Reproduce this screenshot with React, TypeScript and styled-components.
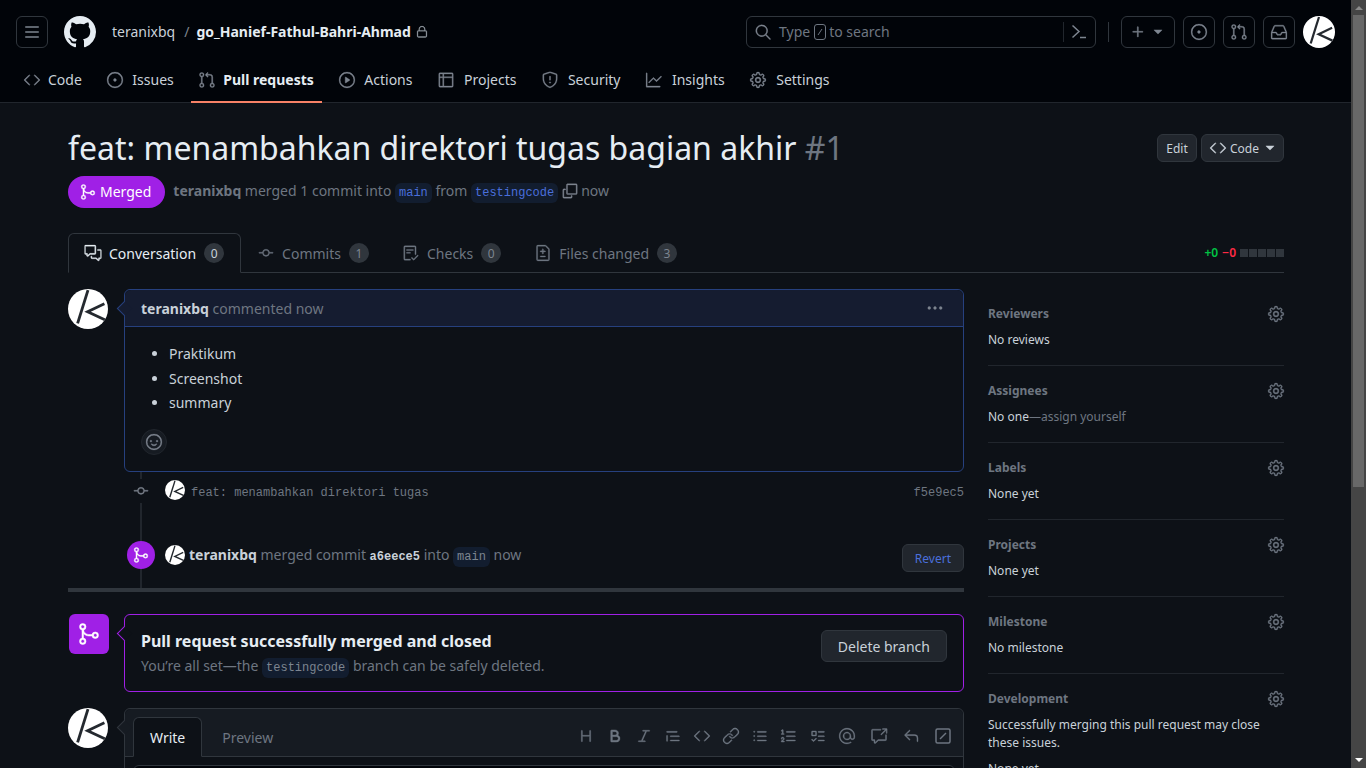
import React from 'react';
import styled, { createGlobalStyle } from 'styled-components';
import { BsGithub } from 'react-icons/bs';
import {
  GoBold,
  GoChecklist,
  GoCode,
  GoCommentDiscussion,
  GoCopy,
  GoCrossReference,
  GoFileDiff,
  GoGear,
  GoGitCommit,
  GoGitMerge,
  GoGitPullRequest,
  GoGraph,
  GoHeading,
  GoInbox,
  GoIssueOpened,
  GoItalic,
  GoKebabHorizontal,
  GoLink,
  GoListOrdered,
  GoListUnordered,
  GoLock,
  GoMention,
  GoPlay,
  GoPlus,
  GoQuote,
  GoReply,
  GoSearch,
  GoShield,
  GoSmiley,
  GoTable,
  GoTasklist,
  GoTriangleDown,
} from 'react-icons/go';

const colors = {
  page: '#0d1117',
  header: '#010409',
  border: '#30363d',
  softBorder: '#21262d',
  text: '#e6edf3',
  body: '#c9d1d9',
  muted: '#7d8590',
  dim: '#6e7681',
  accent: '#4a6fdc',
  accentBg: '#121d2f',
  accentBorder: '#26407e',
  commentHead: '#151c30',
  merged: '#a020e6',
  button: '#21262d',
  panel: '#161b22',
};

const GlobalStyle = createGlobalStyle`
  html, body {
    margin: 0;
    height: 100%;
    overflow: hidden;
    background: ${colors.page};
  }

  body {
    font-family: 'Noto Sans', sans-serif;
    font-size: 14px;
    line-height: 21px;
    color: ${colors.text};
  }

  * {
    box-sizing: border-box;
  }

  /* the go set ships the 24 grid, blown up a little to read like the 16 grid */
  svg[viewBox='0 0 24 24'] {
    transform: scale(1.08);
    stroke: currentColor;
    stroke-width: 0.5px;
  }
`;

const Avatar: React.FC<{ size: number }> = ({ size }) => (
  <AvatarSvg width={size} height={size} viewBox="0 0 100 100">
    <circle cx="50" cy="50" r="50" fill="#fff" />
    <path d="M50 3 24 86" stroke="#24292f" strokeWidth="7" fill="none" />
    <path d="M91 37 49 57l43 20" stroke="#24292f" strokeWidth="7" fill="none" />
  </AvatarSvg>
);

const SlashBox: React.FC<{ size: number }> = ({ size }) => (
  <svg width={size} height={size} viewBox="0 0 16 16" fill="none" stroke="currentColor">
    <rect x="1" y="1" width="14" height="14" rx="1.5" strokeWidth="1.5" />
    <path d="M5 11l6-6" strokeWidth="1.5" />
  </svg>
);

const SearchSlash: React.FC = () => (
  <svg width="12" height="16" viewBox="0 0 12 16" fill="none" stroke="currentColor">
    <rect x="0.5" y="0.5" width="11" height="15" rx="2.5" />
    <path d="M4 11l4-6" />
  </svg>
);

const ThreeBars: React.FC = () => (
  <svg width="16" height="16" viewBox="0 0 16 16" fill="none" stroke="currentColor" strokeWidth="1.5" strokeLinecap="round">
    <path d="M1.75 3h12.5M1.75 8h12.5M1.75 13h12.5" />
  </svg>
);

const Prompt: React.FC = () => (
  <svg width="16" height="16" viewBox="0 0 16 16" fill="none" stroke="currentColor" strokeWidth="1.5">
    <path d="M1.5 1.5 8 7.5l-6.5 6M9 13.5h6" />
  </svg>
);

const navItems = [
  { label: 'Code', icon: GoCode, gap: 8 },
  { label: 'Issues', icon: GoIssueOpened, gap: 9 },
  { label: 'Pull requests', icon: GoGitPullRequest, gap: 8, active: true },
  { label: 'Actions', icon: GoPlay, gap: 9 },
  { label: 'Projects', icon: GoTable, gap: 10 },
  { label: 'Security', icon: GoShield, gap: 10 },
  { label: 'Insights', icon: GoGraph, gap: 10 },
  { label: 'Settings', icon: GoGear, gap: 10 },
];

const prTabs = [
  { label: 'Conversation', count: 0, icon: GoCommentDiscussion, active: true },
  { label: 'Commits', count: 1, icon: GoGitCommit },
  { label: 'Checks', count: 0, icon: GoChecklist },
  { label: 'Files changed', count: 3, icon: GoFileDiff },
];

const toolbarIcons = [
  GoHeading,
  GoBold,
  GoItalic,
  GoQuote,
  GoCode,
  GoLink,
  GoListUnordered,
  GoListOrdered,
  GoTasklist,
  GoMention,
  GoCrossReference,
  GoReply,
];

const sidebarSections = [
  { title: 'Reviewers', body: 'No reviews' },
  { title: 'Assignees', body: 'No one', hint: 'assign yourself' },
  { title: 'Labels', body: 'None yet' },
  { title: 'Projects', body: 'None yet' },
  { title: 'Milestone', body: 'No milestone' },
  {
    title: 'Development',
    body: 'Successfully merging this pull request may close these issues.',
    last: true,
  },
];

export default function App() {
  return (
    <>
      <GlobalStyle />
      <Screen>
        <Page>
          <Header>
            <TopRow>
              <IconButton>
                <ThreeBars />
              </IconButton>
              <GithubLogo>
                <BsGithub size={32} />
              </GithubLogo>
              <Owner>teranixbq</Owner>
              <Slash>/</Slash>
              <RepoName>go_Hanief-Fathul-Bahri-Ahmad</RepoName>
              <RepoLock>
                <GoLock size={12} />
              </RepoLock>
              <SearchBox>
                <GoSearch size={16} />
                <SearchHint>
                  Type
                  <SearchKey>
                    <SearchSlash />
                  </SearchKey>
                  to search
                </SearchHint>
                <SearchDivider />
                <Prompt />
              </SearchBox>
              <HeaderDivider />
              <PlusButton>
                <GoPlus size={16} />
                <Caret size={16} />
              </PlusButton>
              <IconButton>
                <GoIssueOpened size={16} />
              </IconButton>
              <IconButton>
                <GoGitPullRequest size={16} />
              </IconButton>
              <IconButton>
                <GoInbox size={16} />
              </IconButton>
              <Avatar size={32} />
            </TopRow>
            <Nav>
              {navItems.map(({ label, icon: Icon, active, gap }) => (
                <NavTab key={label} $active={active} $gap={gap}>
                  <Icon size={16} />
                  <span>{label}</span>
                </NavTab>
              ))}
            </Nav>
          </Header>

          <Content>
            <TitleRow>
              <Title>
                feat: menambahkan direktori tugas bagian akhir <TitleNumber>#1</TitleNumber>
              </Title>
              <TitleActions>
                <SmallButton>Edit</SmallButton>
                <SmallButton>
                  <GoCode size={16} />
                  Code
                  <CodeCaret>
                    <Caret size={16} />
                  </CodeCaret>
                </SmallButton>
              </TitleActions>
            </TitleRow>

            <StateRow>
              <MergedPill>
                <GoGitMerge size={16} />
                <PillLabel>Merged</PillLabel>
              </MergedPill>
              <StateText>
                <strong>teranixbq</strong> merged 1 commit into <BranchRef>main</BranchRef> from{' '}
                <BranchRef>testingcode</BranchRef>
                <CopyIcon>
                  <GoCopy size={16} />
                </CopyIcon>
                now
              </StateText>
            </StateRow>

            <TabBar>
              {prTabs.map(({ label, count, icon: Icon, active }) => (
                <PrTab key={label} $active={active}>
                  <Icon size={16} />
                  {label}
                  <Counter $active={active}>{count}</Counter>
                </PrTab>
              ))}
              <DiffStat>
                <Added>+0</Added>
                <Removed>−0</Removed>
                <DiffBlocks>
                  {[0, 1, 2, 3, 4].map((n) => (
                    <DiffBlock key={n} />
                  ))}
                </DiffBlocks>
              </DiffStat>
            </TabBar>

            <Columns>
              <Discussion>
                <EntryRow>
                  <Avatar size={40} />
                  <CommentBox>
                    <CommentHead>
                      <span>
                        <strong>teranixbq</strong> commented now
                      </span>
                      <GoKebabHorizontal size={16} />
                    </CommentHead>
                    <CommentBody>
                      <BulletList>
                        <li>Praktikum</li>
                        <li>Screenshot</li>
                        <li>summary</li>
                      </BulletList>
                      <ReactionButton>
                        <GoSmiley size={16} />
                      </ReactionButton>
                    </CommentBody>
                  </CommentBox>
                </EntryRow>

                <Timeline>
                  <CommitRow>
                    <CommitBadge>
                      <GoGitCommit size={16} />
                    </CommitBadge>
                    <Avatar size={20} />
                    <CommitMessage>feat: menambahkan direktori tugas</CommitMessage>
                    <CommitSha>f5e9ec5</CommitSha>
                  </CommitRow>
                  <MergeEvent>
                    <MergeBadge>
                      <GoGitMerge size={16} />
                    </MergeBadge>
                    <Avatar size={20} />
                    <MergeText>
                      <strong>teranixbq</strong> merged commit <ShaLink>a6eece5</ShaLink> into{' '}
                      <PlainRef>main</PlainRef> now
                    </MergeText>
                    <RevertButton>Revert</RevertButton>
                  </MergeEvent>
                </Timeline>
                <ThickRule />

                <MergedRow>
                  <MergedSquare>
                    <GoGitMerge size={24} />
                  </MergedSquare>
                  <MergedBox>
                    <div>
                      <MergedTitle>Pull request successfully merged and closed</MergedTitle>
                      <MergedSub>
                        You’re all set—the <PlainRef>testingcode</PlainRef> branch can be safely
                        deleted.
                      </MergedSub>
                    </div>
                    <DeleteButton>Delete branch</DeleteButton>
                  </MergedBox>
                </MergedRow>

                <EditorRow>
                  <Avatar size={40} />
                  <EditorBox>
                    <EditorHead>
                      <EditorTab $active>Write</EditorTab>
                      <EditorTab>Preview</EditorTab>
                      <Toolbar>
                        {toolbarIcons.map((Icon, n) => (
                          <ToolbarIcon key={n} $wide={n >= 10}>
                            <Icon size={16} />
                          </ToolbarIcon>
                        ))}
                        <ToolbarIcon $wide>
                          <SlashBox size={16} />
                        </ToolbarIcon>
                      </Toolbar>
                    </EditorHead>
                    <TextArea />
                  </EditorBox>
                </EditorRow>
              </Discussion>

              <Sidebar>
                {sidebarSections.map(({ title, body, hint, last }) => (
                  <SideSection key={title} $last={last}>
                    <SideHead>
                      {title}
                      <GoGear size={16} />
                    </SideHead>
                    <SideBody>
                      {body}
                      {hint && <SideHint>—{hint}</SideHint>}
                    </SideBody>
                  </SideSection>
                ))}
                <SideBody>None yet</SideBody>
              </Sidebar>
            </Columns>
          </Content>
        </Page>
        <ScrollBar>
          <ScrollArrow $up />
          <ScrollThumb />
          <ScrollArrow />
        </ScrollBar>
      </Screen>
    </>
  );
}

const Screen = styled.div`
  display: flex;
  height: 100vh;
  overflow: hidden;
`;

const Page = styled.div`
  flex: 1;
  min-width: 0;
`;

const Header = styled.header`
  height: 103px;
  background: ${colors.header};
  box-shadow: inset 0 -1px 0 ${colors.softBorder};
`;

const TopRow = styled.div`
  display: flex;
  align-items: center;
  padding: 16px 16px 0;
  color: ${colors.muted};
`;

const IconButton = styled.div`
  display: flex;
  align-items: center;
  justify-content: center;
  flex: none;
  width: 32px;
  height: 32px;
  margin-right: 8px;
  border: 1px solid ${colors.border};
  border-radius: 6px;
  color: ${colors.muted};
`;

const GithubLogo = styled.div`
  display: flex;
  margin: 0 16px 0 8px;
  color: ${colors.text};
`;

const Owner = styled.span`
  padding-bottom: 2px;
  color: ${colors.body};
`;

const Slash = styled.span`
  margin: 0 7px 0 9px;
  padding-bottom: 2px;
  color: ${colors.muted};
`;

const RepoName = styled.span`
  padding-bottom: 2px;
  font-weight: 700;
  color: ${colors.text};
`;

const RepoLock = styled.span`
  display: flex;
  margin-left: 5px;
  color: #9da5ae;
`;

const SearchBox = styled.div`
  display: flex;
  align-items: center;
  flex: none;
  width: 350px;
  height: 32px;
  margin-left: auto;
  padding: 0 8px;
  border: 1px solid ${colors.border};
  border-radius: 6px;
  color: ${colors.muted};
`;

const SearchHint = styled.span`
  display: flex;
  align-items: center;
  flex: 1;
  margin-left: 8px;
  padding-bottom: 2px;
  color: ${colors.dim};
`;

const SearchKey = styled.span`
  display: flex;
  margin: 2px 3px 0 4px;
`;

const SearchDivider = styled.span`
  width: 1px;
  height: 20px;
  margin-right: 7px;
  background: ${colors.softBorder};
`;

const HeaderDivider = styled.span`
  flex: none;
  width: 1px;
  height: 20px;
  margin: 0 12px;
  background: ${colors.border};
`;

const PlusButton = styled(IconButton)`
  gap: 4px;
  width: 54px;
`;

const Caret = styled(GoTriangleDown)`
  && {
    transform: none;
    stroke: none;
  }
`;

const Nav = styled.nav`
  display: flex;
  gap: 9.5px;
  height: 47px;
  margin-top: 8px;
  padding: 0 16px;
`;

const NavTab = styled.div<{ $active?: boolean; $gap: number }>`
  position: relative;
  display: flex;
  align-items: center;
  gap: ${({ $gap }) => $gap}px;
  padding: 0 8px;
  color: ${({ $active }) => ($active ? colors.text : colors.body)};
  font-weight: ${({ $active }) => ($active ? 700 : 400)};

  svg {
    color: ${colors.muted};
  }

  &::after {
    content: '';
    display: ${({ $active }) => ($active ? 'block' : 'none')};
    position: absolute;
    left: 0;
    right: 0;
    bottom: 0;
    height: 2px;
    background: #f78166;
  }
`;

const Content = styled.main`
  padding: 25px 67px 0 68px;
`;

const TitleRow = styled.div`
  display: flex;
  align-items: flex-start;
  justify-content: space-between;
`;

const Title = styled.h1`
  margin: 0;
  font-size: 32px;
  font-weight: 400;
  line-height: 40px;
  color: ${colors.text};
`;

const TitleNumber = styled.span`
  color: ${colors.dim};
`;

const TitleActions = styled.div`
  display: flex;
  gap: 4px;
  margin-top: 6px;
`;

const SmallButton = styled.div`
  display: flex;
  align-items: center;
  justify-content: center;
  gap: 4px;
  min-width: 40px;
  height: 28px;
  padding: 0 8px;
  border: 1px solid ${colors.border};
  border-radius: 6px;
  background: ${colors.button};
  color: ${colors.body};
  font-size: 12px;
`;

const CodeCaret = styled.span`
  display: flex;
  margin: 0 -3px 0 -1px;
`;

const StateRow = styled.div`
  display: flex;
  align-items: center;
  gap: 8px;
  margin-top: 8px;
`;

const MergedPill = styled.div`
  display: flex;
  align-items: center;
  gap: 4px;
  height: 32px;
  padding: 0 14px 0 12px;
  border-radius: 16px;
  background: ${colors.merged};
  color: #fff;
`;

const PillLabel = styled.span`
  padding-bottom: 2px;
`;

const StateText = styled.div`
  margin-top: -1px;
  color: ${colors.dim};

  strong {
    font-weight: 700;
  }
`;

const BranchRef = styled.code`
  display: inline-block;
  padding: 0 4px;
  border-radius: 6px;
  background: ${colors.accentBg};
  color: ${colors.accent};
  font-family: 'Liberation Mono', monospace;
  font-size: 12px;
  line-height: 20px;
`;

const CopyIcon = styled.span`
  display: inline-flex;
  margin: 0 3px 0 4px;
  vertical-align: -3px;
  color: ${colors.muted};
`;

const TabBar = styled.div`
  display: flex;
  align-items: flex-end;
  height: 40px;
  margin-top: 25px;
  border-bottom: 1px solid ${colors.border};
`;

const PrTab = styled.div<{ $active?: boolean }>`
  display: flex;
  align-items: center;
  gap: 8px;
  height: 40px;
  margin-bottom: -1px;
  padding: 0 16px;
  border: 1px solid ${({ $active }) => ($active ? colors.border : 'transparent')};
  border-bottom-color: ${({ $active }) => ($active ? colors.page : 'transparent')};
  border-radius: 6px 6px 0 0;
  color: ${({ $active }) => ($active ? colors.text : colors.dim)};

  svg {
    color: ${({ $active }) => ($active ? colors.text : colors.dim)};
  }
`;

const Counter = styled.span<{ $active?: boolean }>`
  display: flex;
  align-items: center;
  justify-content: center;
  width: 20px;
  height: 20px;
  border-radius: 10px;
  background: #30363d;
  color: ${({ $active }) => ($active ? colors.body : colors.muted)};
  font-size: 12px;
`;

const DiffStat = styled.div`
  display: flex;
  align-items: center;
  align-self: center;
  margin-left: auto;
  font-size: 12px;
  font-weight: 600;
`;

const Added = styled.span`
  margin-right: 4px;
  color: #00c244;
`;

const Removed = styled.span`
  margin-right: 4px;
  color: #ff2a44;
`;

const DiffBlocks = styled.span`
  display: flex;
  gap: 1px;
`;

const DiffBlock = styled.span`
  width: 8px;
  height: 8px;
  background: #30363d;
`;

const Columns = styled.div`
  display: flex;
  gap: 24px;
  margin-top: 16px;
`;

const Discussion = styled.div`
  flex: none;
  width: 896px;
`;

const EntryRow = styled.div`
  display: flex;
  align-items: flex-start;
  gap: 16px;
`;

const CommentBox = styled.div`
  position: relative;
  flex: 1;
  height: 183px;
  border: 1px solid ${colors.accentBorder};
  border-radius: 6px;

  &::before {
    content: '';
    position: absolute;
    left: -6px;
    top: 13px;
    width: 10px;
    height: 10px;
    border-left: 1px solid ${colors.accentBorder};
    border-bottom: 1px solid ${colors.accentBorder};
    background: ${colors.commentHead};
    transform: rotate(45deg);
  }
`;

const CommentHead = styled.div`
  display: flex;
  align-items: center;
  justify-content: space-between;
  height: 37px;
  padding: 0 20px 0 16px;
  border-bottom: 1px solid ${colors.accentBorder};
  border-radius: 6px 6px 0 0;
  background: ${colors.commentHead};
  color: ${colors.dim};

  strong {
    font-weight: 700;
    color: ${colors.body};
  }

  svg {
    color: ${colors.muted};
  }
`;

const CommentBody = styled.div`
  padding: 16px;
`;

const BulletList = styled.ul`
  margin: 0;
  padding-left: 28px;
  color: ${colors.body};

  li + li {
    margin-top: 3.5px;
  }
`;

const ReactionButton = styled.div`
  display: flex;
  align-items: center;
  justify-content: center;
  width: 26px;
  height: 26px;
  margin-top: 16px;
  border: 1px solid ${colors.softBorder};
  border-radius: 50%;
  background: ${colors.panel};
  color: ${colors.muted};
`;

const Timeline = styled.div`
  position: relative;
  height: 116px;
  margin-left: 56px;

  &::before {
    content: '';
    position: absolute;
    left: 16px;
    top: 0;
    bottom: 0;
    width: 2px;
    background: ${colors.softBorder};
  }
`;

const CommitRow = styled.div`
  display: flex;
  align-items: center;
  height: 36px;
`;

const CommitBadge = styled.span`
  position: relative;
  display: flex;
  align-items: center;
  justify-content: center;
  flex: none;
  width: 24px;
  height: 24px;
  margin: 2px 12px 0 5px;
  background: ${colors.page};
  color: ${colors.muted};
`;

const CommitMessage = styled.span`
  margin-left: 6px;
  padding-top: 6px;
  color: ${colors.dim};
  font-family: 'Liberation Mono', monospace;
  font-size: 12px;
`;

const CommitSha = styled(CommitMessage)`
  margin-left: auto;
`;

const MergeEvent = styled.div`
  display: flex;
  align-items: center;
  height: 28px;
  margin-top: 33px;
`;

const MergeBadge = styled.span`
  position: relative;
  display: flex;
  align-items: center;
  justify-content: center;
  flex: none;
  width: 28px;
  height: 28px;
  margin: 0 10px 0 3px;
  border-radius: 50%;
  background: ${colors.merged};
  color: #fff;
`;

const MergeText = styled.span`
  margin: 2px 0 0 4px;
  color: ${colors.dim};

  strong {
    font-weight: 700;
    color: ${colors.body};
  }
`;

const ShaLink = styled.span`
  color: ${colors.body};
  font-family: 'Liberation Mono', monospace;
  font-size: 12px;
  font-weight: 700;
`;

const RevertButton = styled.div`
  display: flex;
  align-items: center;
  height: 28px;
  margin: 6px 0 0 auto;
  padding: 0 12px;
  border: 1px solid ${colors.border};
  border-radius: 6px;
  background: ${colors.button};
  color: ${colors.accent};
  font-size: 12px;
`;

const ThickRule = styled.div`
  height: 4px;
  background: ${colors.border};
`;

const MergedRow = styled.div`
  display: flex;
  align-items: flex-start;
  gap: 15px;
  margin: 22px 0 0 1px;
`;

const MergedSquare = styled.div`
  display: flex;
  align-items: center;
  justify-content: center;
  flex: none;
  width: 40px;
  height: 40px;
  border-radius: 6px;
  background: ${colors.merged};
  color: #fff;

  && svg {
    transform: none;
  }
`;

const MergedBox = styled.div`
  position: relative;
  display: flex;
  align-items: flex-start;
  justify-content: space-between;
  flex: 1;
  height: 78px;
  padding: 14px 16px 0;
  border: 1px solid ${colors.merged};
  border-radius: 6px;

  &::before {
    content: '';
    position: absolute;
    left: -6px;
    top: 13px;
    width: 10px;
    height: 10px;
    border-left: 1px solid ${colors.merged};
    border-bottom: 1px solid ${colors.merged};
    background: ${colors.page};
    transform: rotate(45deg);
  }
`;

const MergedTitle = styled.div`
  font-size: 16px;
  font-weight: 700;
  line-height: 24px;
  color: ${colors.text};
`;

const MergedSub = styled.div`
  margin-top: 2px;
  color: ${colors.dim};
`;

const PlainRef = styled.code`
  display: inline-block;
  padding: 0 4px;
  border-radius: 6px;
  background: ${colors.accentBg};
  color: ${colors.muted};
  font-family: 'Liberation Mono', monospace;
  font-size: 12px;
  line-height: 20px;
`;

const DeleteButton = styled.div`
  display: flex;
  align-items: center;
  height: 32px;
  margin-top: 1px;
  padding: 0 16px;
  border: 1px solid ${colors.border};
  border-radius: 6px;
  background: ${colors.button};
  color: ${colors.body};
`;

const EditorRow = styled(EntryRow)`
  margin-top: 16px;
`;

const EditorBox = styled.div`
  position: relative;
  flex: 1;
  height: 120px;
  border: 1px solid ${colors.border};
  border-radius: 6px;
  background: ${colors.page};

  &::before {
    content: '';
    position: absolute;
    left: -6px;
    top: 13px;
    width: 10px;
    height: 10px;
    border-left: 1px solid ${colors.border};
    border-bottom: 1px solid ${colors.border};
    background: ${colors.panel};
    transform: rotate(45deg);
  }
`;

const EditorHead = styled.div`
  display: flex;
  align-items: flex-end;
  height: 48px;
  padding: 0 0 0 8px;
  border-bottom: 1px solid ${colors.border};
  border-radius: 6px 6px 0 0;
  background: ${colors.panel};
`;

const EditorTab = styled.div<{ $active?: boolean }>`
  display: flex;
  align-items: center;
  height: 40px;
  margin-bottom: -1px;
  padding: 0 16px;
  border: 1px solid ${({ $active }) => ($active ? colors.border : 'transparent')};
  border-bottom-color: ${({ $active }) => ($active ? colors.page : 'transparent')};
  border-radius: 6px 6px 0 0;
  background: ${({ $active }) => ($active ? colors.page : 'transparent')};
  color: ${({ $active }) => ($active ? colors.text : colors.dim)};

  & + & {
    margin-left: 3px;
  }
`;

const Toolbar = styled.div`
  display: flex;
  align-items: center;
  gap: 13px;
  height: 40px;
  margin-left: auto;
  padding-right: 12px;
  color: ${colors.dim};
`;

const ToolbarIcon = styled.span<{ $wide?: boolean }>`
  display: flex;
  margin-left: ${({ $wide }) => ($wide ? 3 : 0)}px;
`;

const TextArea = styled.div`
  height: 80px;
  margin: 8px;
  border: 1px solid ${colors.border};
  border-radius: 6px;
  background: ${colors.header};
`;

const Sidebar = styled.aside`
  flex: none;
  width: 296px;
  font-size: 12px;
`;

const SideSection = styled.section<{ $last?: boolean }>`
  padding: ${({ $last }) => ($last ? '16px 0 0' : '16px 0')};
  border-bottom: ${({ $last }) => ($last ? 'none' : `1px solid ${colors.softBorder}`)};
`;

const SideHead = styled.div`
  display: flex;
  align-items: center;
  justify-content: space-between;
  color: ${colors.dim};
  font-weight: 700;
  line-height: 18px;

  svg {
    color: ${colors.dim};
  }
`;

const SideBody = styled.div`
  margin-top: 8px;
  color: ${colors.body};
  line-height: 18px;
`;

const SideHint = styled.span`
  color: ${colors.dim};
`;

const ScrollBar = styled.div`
  display: flex;
  flex-direction: column;
  align-items: center;
  flex: none;
  width: 15px;
  height: 100%;
  background: #454545;
`;

const ScrollArrow = styled.span<{ $up?: boolean }>`
  flex: none;
  width: 0;
  height: 0;
  margin: ${({ $up }) => ($up ? '6px 0 5px' : 'auto 0 6px')};
  border-left: 4px solid transparent;
  border-right: 4px solid transparent;
  ${({ $up }) =>
    $up ? 'border-bottom: 4px solid #8a8a8a;' : 'border-top: 4px solid #fff;'}
`;

const ScrollThumb = styled.span`
  flex: none;
  width: 11px;
  height: 472px;
  background: #686868;
`;

const AvatarSvg = styled.svg`
  position: relative;
  flex: none;
  display: block;
`;
